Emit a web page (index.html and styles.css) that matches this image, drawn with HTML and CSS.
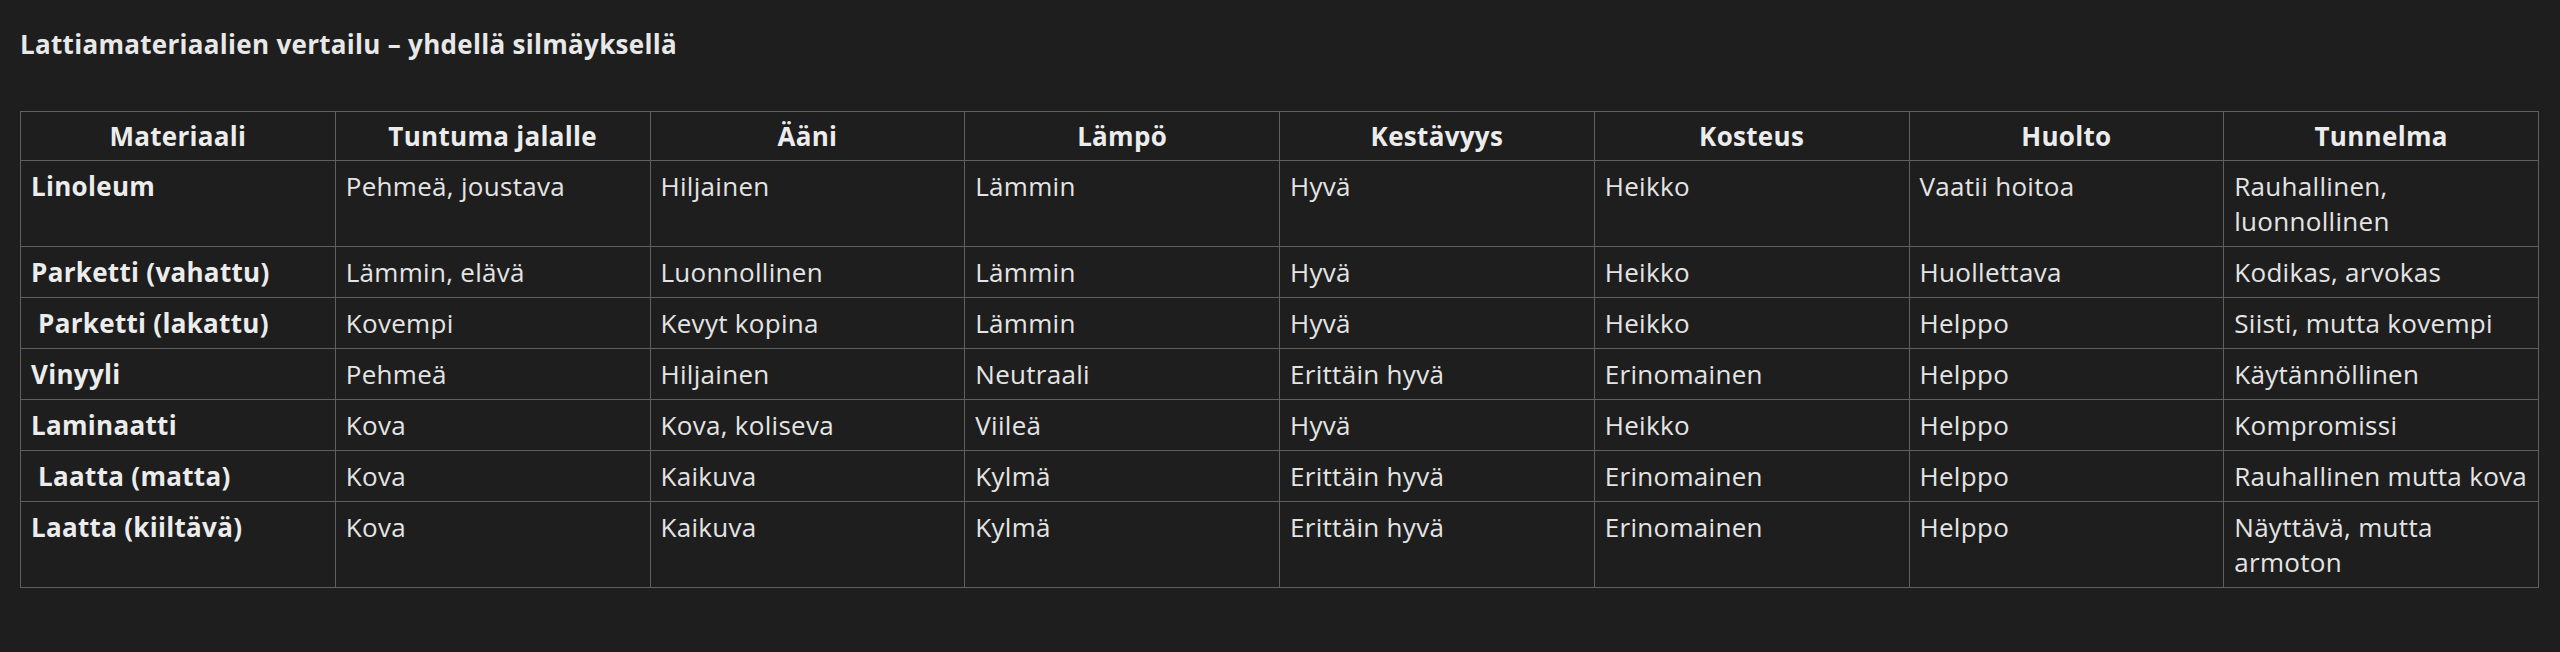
FILE: index.html
```html
<!DOCTYPE html>
<html lang="fi">
<head>
<meta charset="utf-8">
<title>Lattiamateriaalien vertailu</title>
<link rel="stylesheet" href="styles.css">
</head>
<body>
<h3 class="title">Lattiamateriaalien vertailu – yhdellä silmäyksellä</h3>
<table class="compare">
<thead>
<tr><th>Materiaali</th><th>Tuntuma jalalle</th><th>Ääni</th><th>Lämpö</th><th>Kestävyys</th><th>Kosteus</th><th>Huolto</th><th>Tunnelma</th></tr>
</thead>
<tbody>
<tr><td class="name">Linoleum</td><td>Pehmeä, joustava</td><td>Hiljainen</td><td>Lämmin</td><td>Hyvä</td><td>Heikko</td><td>Vaatii hoitoa</td><td>Rauhallinen, luonnollinen</td></tr>
<tr><td class="name">Parketti (vahattu)</td><td>Lämmin, elävä</td><td>Luonnollinen</td><td>Lämmin</td><td>Hyvä</td><td>Heikko</td><td>Huollettava</td><td>Kodikas, arvokas</td></tr>
<tr><td class="name">&nbsp;Parketti (lakattu)</td><td>Kovempi</td><td>Kevyt kopina</td><td>Lämmin</td><td>Hyvä</td><td>Heikko</td><td>Helppo</td><td>Siisti, mutta kovempi</td></tr>
<tr><td class="name">Vinyyli</td><td>Pehmeä</td><td>Hiljainen</td><td>Neutraali</td><td>Erittäin hyvä</td><td>Erinomainen</td><td>Helppo</td><td>Käytännöllinen</td></tr>
<tr><td class="name">Laminaatti</td><td>Kova</td><td>Kova, koliseva</td><td>Viileä</td><td>Hyvä</td><td>Heikko</td><td>Helppo</td><td>Kompromissi</td></tr>
<tr><td class="name">&nbsp;Laatta (matta)</td><td>Kova</td><td>Kaikuva</td><td>Kylmä</td><td>Erittäin hyvä</td><td>Erinomainen</td><td>Helppo</td><td>Rauhallinen mutta kova</td></tr>
<tr><td class="name">Laatta (kiiltävä)</td><td>Kova</td><td>Kaikuva</td><td>Kylmä</td><td>Erittäin hyvä</td><td>Erinomainen</td><td>Helppo</td><td>Näyttävä, mutta armoton</td></tr>
</tbody>
</table>
</body>
</html>
```
FILE: styles.css
```css
html, body {
  margin: 0;
  background: #1e1e1e;
}
body {
  padding: 27px 20px 0 20px;
  font-family: "Open Sans", "Noto Sans", sans-serif;
  color: #e4e4e4;
}
.title {
  margin: 0 0 50px 0;
  font-size: 26px;
  line-height: 34px;
  letter-spacing: 0.3px;
  font-weight: 700;
  color: #e8e8e8;
}
.compare {
  width: 2519px;
  border-collapse: collapse;
  table-layout: fixed;
  font-size: 26px;
  line-height: 35px;
  letter-spacing: 0.3px;
}
.compare th,
.compare td {
  border: 1px solid #5f5f5f;
  padding: 8px 10px 7px 10px;
  text-align: left;
  vertical-align: top;
}
.compare th {
  padding: 7px 10px 6px 10px;
  text-align: center;
  font-weight: 700;
  color: #ececec;
}
.compare td.name {
  font-weight: 700;
  color: #ececec;
}
```
